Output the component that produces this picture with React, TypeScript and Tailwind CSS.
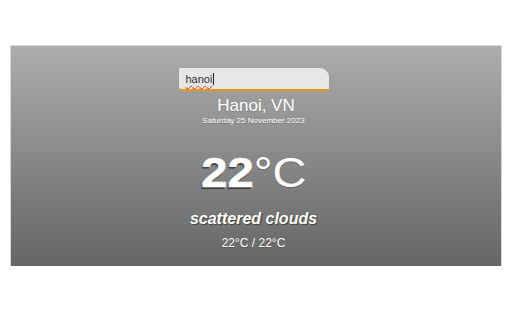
import React from "react";

export default function App() {
  return (
    <div className="w-[512px] h-[320px] bg-white overflow-hidden" style={{ fontFamily: '"Liberation Sans", Arial, sans-serif' }}>
      <div className="mx-[10px] mt-[45px] h-[221px] bg-gradient-to-b from-[#adadad] to-[#666666] border-x border-t border-[#d8d8d8] flex flex-col items-center pt-[22px] pr-[5px] text-white text-center">
        <div className="w-[150px] h-[23px] bg-[#e6e6e6] rounded-tr-[9px] rounded-bl-[4px] border-b-2 border-[#e49a0a] flex items-center pl-[7px] pt-[1px]">
          <span className="text-[11px] text-[#333] underline decoration-wavy decoration-[#d33] decoration-[1px] underline-offset-[2px]">hanoi</span>
          <span className="w-px h-[12px] bg-[#222] ml-[1px]" />
        </div>
        <div className="mt-[5px] ml-[5px] text-[17px] leading-[20px] [text-shadow:0_1px_1px_rgba(0,0,0,0.15)]">Hanoi, VN</div>
        <div className="text-[8px] leading-[10px] [text-shadow:0_1px_1px_rgba(0,0,0,0.2)]">Saturday 25 November 2023</div>
        <div className="mt-[23px] text-[42px] leading-[48px] whitespace-nowrap scale-x-[1.12]">
          <span className="font-bold [-webkit-text-stroke:0.6px_white] [text-shadow:-1px_2px_1px_rgba(0,0,0,0.55)]">22</span>
          <span className="font-normal [text-shadow:0_1px_1px_rgba(0,0,0,0.2)]">°C</span>
        </div>
        <div className="mt-[12px] text-[16px] leading-[20px] font-bold italic [text-shadow:1px_1px_1px_rgba(0,0,0,0.45)]">scattered clouds</div>
        <div className="mt-[6px] text-[12px] leading-[16px] [text-shadow:0_1px_1px_rgba(0,0,0,0.2)]">22°C / 22°C</div>
      </div>
    </div>
  );
}
